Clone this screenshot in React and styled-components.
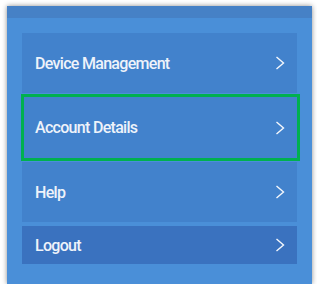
import React from "react";
import styled, { createGlobalStyle } from "styled-components";

const GlobalStyle = createGlobalStyle`
  body {
    margin: 0;
    background: #ffffff;
    font-family: "Roboto", "Liberation Sans", sans-serif;
  }
`;

const Page = styled.div`
  padding: 6px 0 0 7px;
`;

const Panel = styled.div`
  width: 305px;
  height: 278px;
  background: #4a8fd8;
  box-shadow: 0 0 5px rgba(0, 0, 0, 0.45);
  display: flex;
  flex-direction: column;
`;

const TopBar = styled.div`
  height: 12px;
  background: #4681c6;
`;

const List = styled.div`
  display: flex;
  flex-direction: column;
  padding: 15px 15px 0 15px;
`;

const Item = styled.div`
  box-sizing: border-box;
  height: ${(p) => p.$h}px;
  margin-top: ${(p) => p.$gap}px;
  background: ${(p) => (p.$dark ? "#3a72bf" : "#4282cc")};
  display: flex;
  align-items: center;
  justify-content: space-between;
  padding: 0 12px 0 13px;
  color: #eef3fa;
  font-size: 16px;
  letter-spacing: -0.7px;
  ${(p) =>
    p.$active &&
    `
    border: 3px solid #00b04f;
    margin-left: -1px;
    margin-right: -3px;
    padding: 0 12px 0 11px;
  `}
`;

const Label = styled.span`
  font-weight: 500;
`;

function Chevron() {
  return (
    <svg width="10" height="14" viewBox="0 0 10 14" fill="none">
      <path d="M1.5 1 L8.5 7 L1.5 13" stroke="#f4f7fc" strokeWidth="1.4" />
    </svg>
  );
}

const items = [
  { label: "Device Management", h: 60, gap: 0 },
  { label: "Account Details", h: 67, gap: 1, active: true },
  { label: "Help", h: 60, gap: 1 },
  { label: "Logout", h: 38, gap: 4, dark: true },
];

export default function App() {
  return (
    <>
      <GlobalStyle />
      <Page>
        <Panel>
          <TopBar />
          <List>
            {items.map((it) => (
              <Item
                key={it.label}
                $h={it.h}
                $gap={it.gap}
                $active={it.active}
                $dark={it.dark}
              >
                <Label>{it.label}</Label>
                <Chevron />
              </Item>
            ))}
          </List>
        </Panel>
      </Page>
    </>
  );
}
